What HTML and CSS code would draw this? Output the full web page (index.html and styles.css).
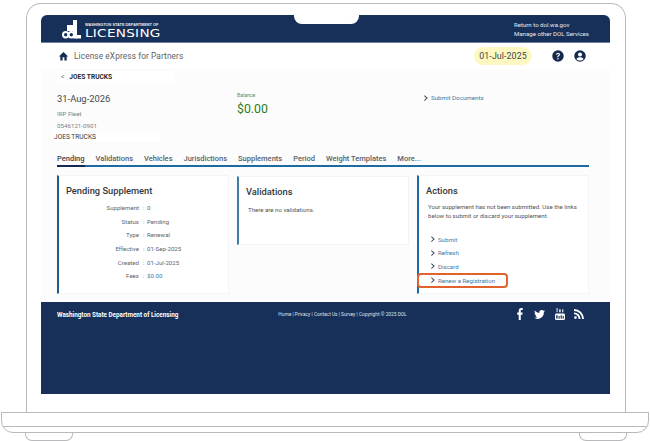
FILE: index.html
```html
<!DOCTYPE html>
<html lang="en">
<head>
<meta charset="utf-8">
<title>License eXpress for Partners</title>
<link rel="stylesheet" href="styles.css">
</head>
<body>
<div class="laptop">
  <div class="screen">
    <div class="notch"></div>
    <header class="brand">
      <div class="logo">
        <svg class="logo-mark" width="20" height="19" viewBox="0 0 20 19">
          <rect x="11" y="0" width="4" height="18.500" fill="#fff"/>
          <rect x="5" y="5" width="7" height="6" fill="#fff"/>
          <rect x="14" y="15" width="5" height="3.500" fill="#fff"/>
          <circle cx="3.700" cy="14.800" r="2.700" fill="none" stroke="#fff" stroke-width="2"/>
          <circle cx="9.300" cy="14.800" r="2.700" fill="#16305a" stroke="#fff" stroke-width="2"/>
        </svg>
        <div class="logo-text">
          <div class="logo-small">WASHINGTON STATE DEPARTMENT OF</div>
          <div class="logo-big">LICENSING</div>
        </div>
      </div>
      <div class="brand-links">
        <div>Return to dol.wa.gov</div>
        <div>Manage other DOL Services</div>
      </div>
    </header>
    <nav class="appbar">
      <svg class="home" width="11" height="10" viewBox="0 0 24 22"><path d="M10 21v-7h4v7h5v-9h3L12 2 2 12h3v9z" fill="#14294f"/></svg>
      <span class="app-title">License eXpress for Partners</span>
      <span class="date-pill">01-Jul-2025</span>
      <svg class="round-icon" width="12" height="12" viewBox="0 0 24 24"><circle cx="12" cy="12" r="11.500" fill="#14294f"/><path d="M8.200 9.400c0-2.300 1.700-3.800 3.900-3.800s3.800 1.400 3.800 3.400c0 1.500-.8 2.300-1.900 3.100-1 .7-1.300 1.200-1.300 2.300h-2.300c0-1.800.5-2.700 1.700-3.600.9-.6 1.400-1.100 1.400-1.800 0-.8-.6-1.400-1.500-1.400-1 0-1.600.7-1.600 1.800z" fill="#fff"/><circle cx="11.900" cy="17.600" r="1.500" fill="#fff"/></svg>
      <svg class="round-icon user-icon" width="12" height="12" viewBox="0 0 24 24"><circle cx="12" cy="12" r="11.500" fill="#14294f"/><circle cx="12" cy="9" r="4" fill="#fff"/><path d="M4.800 18c1.600-2.600 4.200-3.600 7.200-3.600s5.600 1 7.200 3.600c-1.800 2-4.300 3-7.200 3s-5.400-1-7.200-3z" fill="#fff"/></svg>
    </nav>
    <main class="content">
      <div class="crumb"><span class="crumb-arrow">&lt;</span><span class="crumb-name">JOES TRUCKS</span></div>
      <section class="summary">
        <div class="summary-id">
          <div class="expiry">31-Aug-2026</div>
          <div class="meta meta-first">IRP Fleet</div>
          <div class="meta">0546121-0901</div>
          <div class="holder">JOES TRUCKS</div>
        </div>
        <div class="balance">
          <div class="balance-label">Balance</div>
          <div class="balance-value">$0.00</div>
        </div>
        <div class="summary-link"><span class="chev"></span><a class="link">Submit Documents</a></div>
      </section>
      <div class="tabs">
        <span class="tab tab-active">Pending</span>
        <span class="tab">Validations</span>
        <span class="tab">Vehicles</span>
        <span class="tab">Jurisdictions</span>
        <span class="tab">Supplements</span>
        <span class="tab">Period</span>
        <span class="tab">Weight Templates</span>
        <span class="tab">More...</span>
      </div>
      <div class="cards">
        <section class="card card-dark">
          <h2 class="card-title">Pending Supplement</h2>
          <dl class="facts">
            <dt>Supplement</dt><dd>0</dd>
            <dt>Status</dt><dd>Pending</dd>
            <dt>Type</dt><dd>Renewal</dd>
            <dt>Effective</dt><dd>01-Sep-2025</dd>
            <dt>Created</dt><dd>01-Jul-2025</dd>
            <dt>Fees</dt><dd><a class="link">$0.00</a></dd>
          </dl>
        </section>
        <section class="card card-short">
          <h2 class="card-title">Validations</h2>
          <p class="card-text">There are no validations.</p>
        </section>
        <section class="card card-mid">
          <h2 class="card-title">Actions</h2>
          <p class="card-text action-text">Your supplement has not been submitted. Use the links below to submit or discard your supplement.</p>
          <ul class="actions">
            <li class="action"><span class="chev"></span><a class="link">Submit</a></li>
            <li class="action"><span class="chev"></span><a class="link">Refresh</a></li>
            <li class="action"><span class="chev"></span><a class="link">Discard</a></li>
            <li class="action action-marked"><span class="chev"></span><a class="link">Renew a Registration</a></li>
          </ul>
        </section>
      </div>
    </main>
    <footer class="footer">
      <strong class="footer-name">Washington State Department of Licensing</strong>
      <span class="footer-links">Home | Privacy | Contact Us | Survey | Copyright © 2025 DOL</span>
      <div class="social">
        <svg class="social-f" width="6" height="12" viewBox="0 0 8 14" preserveAspectRatio="none"><path d="M2.300 14V7.800H.3V5.300h2V3.500C2.300 1.300 3.500 0 5.600 0c.9 0 1.700.1 2 .1v2.300H6.300c-1 0-1.300.5-1.300 1.300v1.600h2.500l-.4 2.500H5V14z" fill="#fff"/></svg>
        <svg width="11" height="9" viewBox="0 0 24 20"><path d="M24 2.400c-.9.400-1.800.7-2.800.8 1-.6 1.800-1.600 2.200-2.700-1 .6-2 1-3.100 1.200A4.900 4.900 0 0 0 11.900 6.200C7.800 6 4.200 4 1.700.9c-1.300 2.200-.7 5.100 1.500 6.600-.8 0-1.600-.2-2.200-.6 0 2.400 1.700 4.500 3.900 5-.7.200-1.500.2-2.200.1.600 2 2.400 3.400 4.600 3.400A9.900 9.900 0 0 1 0 17.400 14 14 0 0 0 21.600 5c1-.7 1.800-1.600 2.400-2.600z" fill="#fff"/></svg>
        <svg width="10" height="12" viewBox="0 0 10 14" preserveAspectRatio="none"><rect x="0" y="6.500" width="10" height="7.500" rx="1.500" fill="#fff"/><rect x="1.200" y="8.400" width="1.400" height="4" fill="#16305a"/><rect x="3.500" y="9.400" width="1.200" height="3" fill="#16305a"/><rect x="5.600" y="8.400" width="1.200" height="4" fill="#16305a"/><rect x="7.600" y="9.400" width="1.200" height="3" fill="#16305a"/><rect x="1.500" y="0" width="1.200" height="5" fill="#c9d0da"/><rect x="4" y="1.500" width="1.800" height="3.500" fill="#c9d0da"/><rect x="7" y="1.500" width="1.400" height="3.500" fill="#c9d0da"/></svg>
        <svg width="10" height="10" viewBox="0 0 11 11"><circle cx="1.600" cy="9.400" r="1.500" fill="#fff"/><path d="M0 3.800v2.100a5 5 0 0 1 5.100 5.100h2.100A7.200 7.200 0 0 0 0 3.800z" fill="#fff"/><path d="M0 0v2.100A8.900 8.900 0 0 1 8.900 11H11A11 11 0 0 0 0 0z" fill="#fff"/></svg>
      </div>
    </footer>
  </div>
</div>
<div class="base"></div>
<div class="feet"><div class="foot"></div><div class="foot"></div></div>
</body>
</html>
```

FILE: styles.css
```css
* { box-sizing: border-box; }
html, body { margin: 0; padding: 0; }
body {
  width: 650px;
  height: 441px;
  overflow: hidden;
  background: #fff;
  font-family: Roboto, "Open Sans", sans-serif;
  color: #3b3f44;
}
.laptop {
  margin: 3px 0 0 26px;
  width: 600px;
  height: 409px;
  border: 1px solid #b9b9bb;
  border-bottom: 0;
  border-radius: 15px 15px 0 0;
  padding: 11px 15px 0 14px;
}
.screen {
  position: relative;
  width: 569px;
  height: 379px;
  display: flex;
  flex-direction: column;
  border-radius: 6px 6px 0 0;
  overflow: hidden;
  background: #fcfcfc;
}
.notch {
  position: absolute;
  top: 0;
  left: 253px;
  width: 65px;
  height: 9px;
  background: #fff;
  border-radius: 0 0 8px 8px;
}
.brand {
  height: 28px;
  flex: none;
  background: #16305a;
  border-bottom: 1px solid #6c7f9c;
  display: flex;
  justify-content: space-between;
  align-items: center;
  padding: 0 21px 0 21px;
  color: #fff;
}
.logo { display: flex; align-items: center; }
.logo-mark { margin: 2px 3px 0 0; }
.logo-text { display: flex; flex-direction: column; padding-top: 4px; }
.logo-small {
  font-family: "Liberation Sans", sans-serif;
  font-size: 4px;
  font-weight: 700;
  line-height: 5px;
  white-space: nowrap;
  color: #e8ebf0;
  transform: scaleX(.96);
  transform-origin: left center;
  width: 76px;
}
.logo-big {
  font-family: "DejaVu Sans", sans-serif;
  font-size: 11.200px;
  line-height: 13px;
  letter-spacing: .2px;
  white-space: nowrap;
  transform: scaleX(1.22);
  transform-origin: left center;
}
.brand-links { font-size: 6.100px; line-height: 9px; color: #e6eaf0; }
.appbar {
  height: 26px;
  flex: none;
  background: #fff;
  display: flex;
  align-items: center;
  padding: 0 24px 0 17px;
}
.home { margin-right: 5px; }
.app-title { font-size: 8.300px; color: #5c6066; letter-spacing: .1px; }
.date-pill {
  margin-left: auto;
  width: 58px;
  height: 18px;
  border-radius: 9px;
  background: #fdf8c2;
  font-size: 8.800px;
  letter-spacing: .1px;
  line-height: 18px;
  text-align: center;
  color: #3f4347;
}
.round-icon { margin-left: 20px; }
.user-icon { margin-left: 10px; }
.content {
  flex: 1;
  padding: 2px 21px 8px 16px;
  display: flex;
  flex-direction: column;
}
.crumb {
  width: 118px;
  height: 12px;
  background: #fff;
  display: flex;
  align-items: center;
  font-size: 6.600px;
  font-weight: 700;
  color: #25282c;
}
.crumb-arrow { margin: 0 5px 0 4px; font-weight: 400; color: #777; }
.summary {
  height: 57px;
  margin-top: 8px;
  display: grid;
  grid-template-columns: 180px 186px 1fr;
}
.expiry { font-size: 9.400px; line-height: 15px; color: #43474b; }
.meta { font-size: 6.200px; line-height: 11.500px; color: #7b7f83; }
.meta-first { margin-top: 3px; }
.holder {
  width: 106px;
  margin-left: -3px;
  background: #fff;
  font-size: 6.600px;
  line-height: 10px;
  color: #34373b;
}
.balance { padding-top: 1px; }
.balance-label { font-size: 5.100px; line-height: 6px; color: #5f8a55; }
.balance-value { margin-top: 2px; font-size: 12.300px; line-height: 19px; color: #2f7d22; }
.summary-link { font-size: 6.200px; line-height: 15px; }
.chev { display: inline-block; width: 8px; }
.chev::before {
  content: "";
  display: inline-block;
  box-sizing: border-box;
  width: 3.500px;
  height: 3.500px;
  margin: 0 0 1px 0;
  border-top: 1px solid #3c4c60;
  border-right: 1px solid #3c4c60;
  transform: rotate(45deg);
}
.link { color: #3f78a3; }
.tabs {
  height: 19px;
  flex: none;
  padding-top: 3px;
  display: flex;
  gap: 11px;
  border-bottom: 2px solid #1b6aa0;
}
.tab { font-size: 7.500px; line-height: 15px; font-weight: 500; color: #5a5f65; white-space: nowrap; }
.tab-active {
  height: 16px;
  border-bottom: 2px solid #14294f;
  color: #3d4146;
}
.cards {
  flex: 1;
  margin-top: 8px;
  display: grid;
  grid-template-columns: 172px 172px 172px;
  gap: 8px;
  align-items: start;
}
.card {
  height: 119px;
  background: #fff;
  border: 1px solid #f2f4f6;
  border-left: 2px solid #1c68a4;
  padding: 8px 8px 0 7px;
}
.card-dark { border-left-color: #1f5c94; }
.card-short { height: 69px; margin-top: 1px; border-left-color: #3f7ca8; }
.card-title { margin: 0; font-size: 9.300px; line-height: 13px; font-weight: 500; color: #33373c; }
.card-text { margin: 7px 0 0 2px; font-size: 6.100px; line-height: 9.300px; color: #505458; }
.facts {
  margin: 4px 0 0;
  display: grid;
  grid-template-columns: 73px 1fr;
  grid-auto-rows: 13.700px;
  font-size: 6.100px;
  line-height: 13.700px;
  color: #62666b;
}
.facts dt { text-align: right; }
.facts dd { margin: 0; padding-left: 4px; }
.facts dd::before { content: ":"; display: inline-block; width: 4px; }
.action-text { margin-top: 5px; }
.actions { list-style: none; margin: 12px 0 0 -7px; padding: 0; }
.action {
  height: 13.700px;
  padding-left: 11px;
  font-size: 6.100px;
  line-height: 13.700px;
  white-space: nowrap;
}
.action-marked { position: relative; }
.action-marked::after {
  content: "";
  position: absolute;
  box-sizing: border-box;
  left: -2px;
  top: -1px;
  width: 91px;
  height: 15px;
  border: 2px solid #e0622c;
  border-radius: 4px;
}
.footer {
  height: 92px;
  flex: none;
  background: #16305a;
  padding: 0 26px 0 16px;
  display: flex;
  align-items: flex-start;
  color: #fff;
}
.footer-name { margin-top: 8px; font-size: 6.300px; line-height: 10px; font-weight: 700; white-space: nowrap; }
.footer-links { margin: 8px 0 0 100px; font-size: 4.820px; line-height: 10px; color: #dfe4ec; white-space: nowrap; }
.social {
  margin: 6px 0 0 auto;
  display: flex;
  align-items: center;
  gap: 9.500px;
}
.social-f { margin-right: 2px; }
.base {
  width: 648px;
  height: 21px;
  margin-left: 1px;
  border: 1px solid #b9b9bb;
  border-radius: 0 0 12px 12px;
  background: linear-gradient(#fff 0 12.500px, #b9b9bb 12.500px 13.500px, #fff 13.500px);
}
.feet {
  display: flex;
  justify-content: space-between;
  padding: 0 23px 0 25px;
}
.foot {
  width: 48px;
  height: 8px;
  border: 1px solid #b9b9bb;
  border-top: 0;
  border-radius: 0 0 7px 7px;
}
```
